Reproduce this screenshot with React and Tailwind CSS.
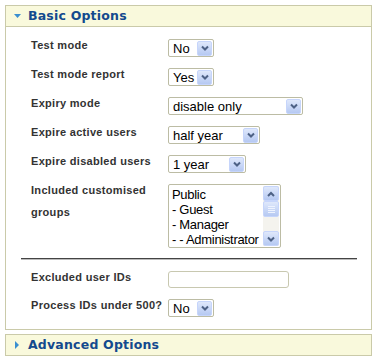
import React from "react";

const LABEL_FONT = { fontFamily: '"Liberation Sans", Arial, sans-serif' };
const TITLE_FONT = { fontFamily: '"DejaVu Sans", Verdana, sans-serif' };

function Chevron({ up = false }) {
  return (
    <svg width="8" height="6" viewBox="0 0 8 6" className="block">
      <path
        d={up ? "M1 5 L4 2 L7 5" : "M1 1.5 L4 4.5 L7 1.5"}
        fill="none"
        stroke="#4d6185"
        strokeWidth="2"
      />
    </svg>
  );
}

function XpButton({ children, className = "" }) {
  return (
    <div
      className={
        "flex items-center justify-center rounded-[2px] border border-[#c6d5fb] bg-gradient-to-b from-[#dfe8fb] to-[#b6c9f2] " +
        className
      }
    >
      {children}
    </div>
  );
}

function Select({ value, width }) {
  return (
    <div
      className="flex h-[18px] items-center rounded-[2px] border border-[#bcbca4] bg-white pl-[4px] pr-[1px] text-[13px] text-black"
      style={{ width, ...LABEL_FONT }}
    >
      <span className="leading-none">{value}</span>
      <XpButton className="ml-auto h-[15px] w-[15px]">
        <Chevron />
      </XpButton>
    </div>
  );
}

function Row({ label, children, className = "" }) {
  return (
    <div className={"flex items-start " + className}>
      <div
        className="w-[137px] shrink-0 text-[11px] font-bold leading-[22px] tracking-[0.3px] text-[#333]"
        style={LABEL_FONT}
      >
        {label}
      </div>
      <div className="mt-[5px]">{children}</div>
    </div>
  );
}

function ListBox() {
  const items = ["Public", "- Guest", "- Manager", "- - Administrator"];
  return (
    <div
      className="flex h-[64px] w-[113px] rounded-[2px] border border-[#bcbca4] bg-white text-[13px] tracking-[-0.3px] text-black"
      style={LABEL_FONT}
    >
      <div className="flex-1 overflow-hidden pl-[3px] pt-[2px]">
        {items.map((it) => (
          <div key={it} className="whitespace-nowrap leading-[15px]">
            {it}
          </div>
        ))}
      </div>
      <div className="my-[1px] mr-[1px] flex w-[16px] flex-col bg-[#f4f3ee]">
        <XpButton className="h-[15px] w-[16px]">
          <Chevron up />
        </XpButton>
        <XpButton className="h-[16px] w-[16px] flex-col gap-[1px]">
          <div className="h-px w-[7px] bg-[#eef3fe]" />
          <div className="h-px w-[7px] bg-[#eef3fe]" />
          <div className="h-px w-[7px] bg-[#eef3fe]" />
          <div className="h-px w-[7px] bg-[#eef3fe]" />
        </XpButton>
        <div className="flex-1" />
        <XpButton className="h-[15px] w-[16px]">
          <Chevron />
        </XpButton>
      </div>
    </div>
  );
}

function PanelHeader({ title, open }) {
  return (
    <div className="flex h-[22px] items-center border border-[#cacaa9] bg-[#f9f9dc] pl-[8px]">
      <svg width="7" height="8" viewBox="0 0 7 8" className="mr-[7px] block">
        {open ? (
          <path d="M0 2 L7 2 L3.5 6 Z" fill="#3a8fd0" />
        ) : (
          <path d="M1 0 L5 4 L1 8 Z" fill="#3a8fd0" />
        )}
      </svg>
      <span
        className="text-[12.5px] font-bold tracking-[0.2px] text-[#134a8e]"
        style={TITLE_FONT}
      >
        {title}
      </span>
    </div>
  );
}

export default function App() {
  return (
    <div className="min-h-[362px] bg-white pl-[5px] pt-[5px]">
      <div className="w-[367px]">
        <PanelHeader title="Basic Options" open />
        <div className="flex flex-col border-x border-b border-[#cacaa9] bg-white pb-[12px] pl-[25px] pt-[7px]">
          <Row label="Test mode">
            <Select value="No" width={46} />
          </Row>
          <Row label="Test mode report" className="mt-[6px]">
            <Select value="Yes" width={46} />
          </Row>
          <Row label="Expiry mode" className="mt-[6px]">
            <Select value="disable only" width={135} />
          </Row>
          <Row label="Expire active users" className="mt-[6px]">
            <Select value="half year" width={92} />
          </Row>
          <Row label="Expire disabled users" className="mt-[6px]">
            <Select value="1 year" width={78} />
          </Row>
          <Row label={<>Included customised<br />groups</>} className="mt-[6px]">
            <ListBox />
          </Row>
          <div className="ml-[-10px] mr-[14px] mt-[10px] h-[2px] border-t border-[#444] bg-[#bbb]" />
          <Row label="Excluded user IDs" className="mt-[6px]">
            <div className="h-[17px] w-[121px] rounded-[3px] border border-[#c8c8b0] bg-white" />
          </Row>
          <Row label="Process IDs under 500?" className="mt-[6px]">
            <Select value="No" width={46} />
          </Row>
        </div>
        <div className="mt-[4px]">
          <PanelHeader title="Advanced Options" />
        </div>
      </div>
    </div>
  );
}
